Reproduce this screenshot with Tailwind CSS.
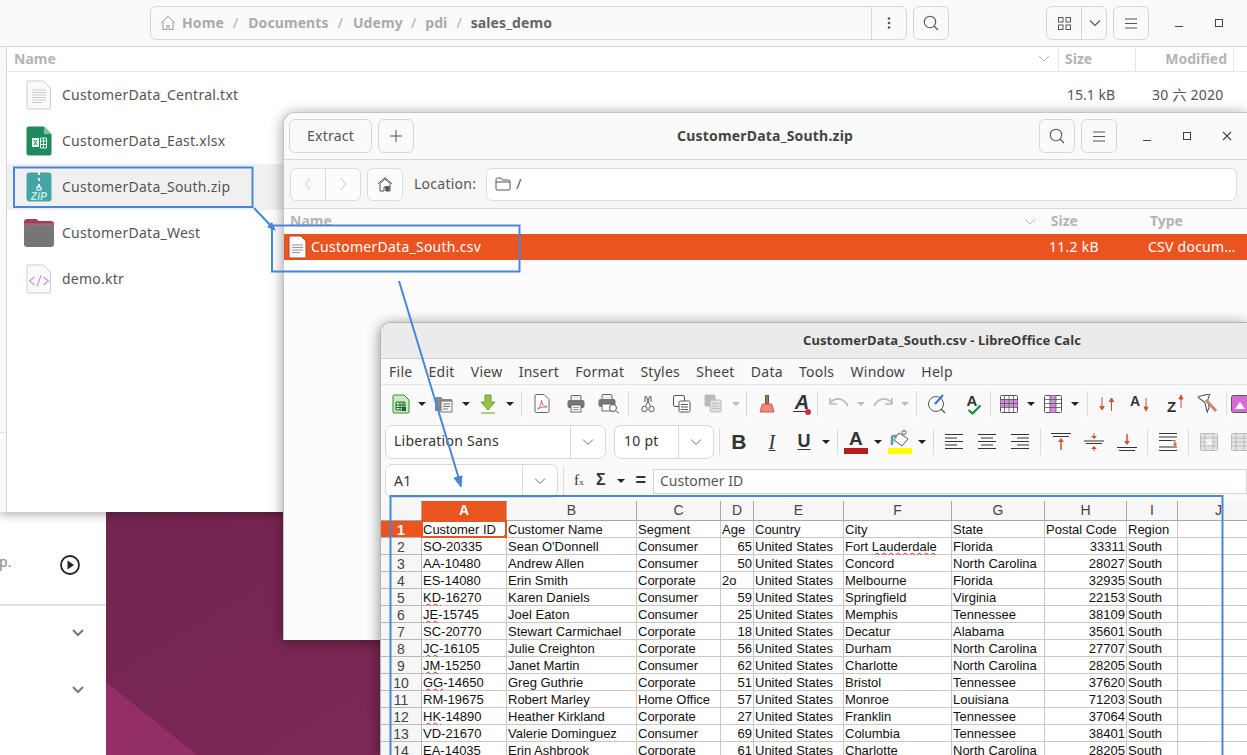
<!DOCTYPE html>
<html lang="en">
  <head>
    <meta charset="UTF-8" />
    <title>CustomerData_South</title>
    <script src="https://cdn.jsdelivr.net/npm/@tailwindcss/browser@4"></script>
  </head>
  <body class="w-[1247px] h-[755px] overflow-hidden font-['Noto_Sans','Noto_Sans_CJK_SC',sans-serif] tracking-[0.25px]">
    <div class="relative w-[1247px] h-[755px] overflow-hidden bg-gradient-to-br from-[#66224a] to-[#8a2a5c]">
      <!-- wallpaper triangle -->
      <svg class="absolute left-0 top-0" width="1247" height="755"><polygon points="106,682 197,755 106,755" fill="#932e68" /></svg>

      <!-- window behind everything -->
      <div class="absolute left-0 top-[512px] w-[106px] h-[243px] bg-white text-[#888] text-[14px]">
        <div class="h-[94px] border-b-2 border-[#e2e2e2] flex items-center justify-between pl-0 pr-[26px]">
          <span class="-ml-[1px] mt-[6px]">p.</span>
          <svg width="20" height="20" viewBox="0 0 20 20" class="mt-[13px]"><circle cx="10" cy="10" r="9" fill="none" stroke="#222" stroke-width="1.8" /><polygon points="7.5,5.5 14,10 7.5,14.5" fill="#222" /></svg>
        </div>
        <svg class="absolute left-[71px] top-[116px]" width="14" height="10" viewBox="0 0 14 10"><path d="M2 2l5 5 5-5" fill="none" stroke="#777" stroke-width="2" /></svg>
        <svg class="absolute left-[71px] top-[173px]" width="14" height="10" viewBox="0 0 14 10"><path d="M2 2l5 5 5-5" fill="none" stroke="#777" stroke-width="2" /></svg>
      </div>

      <!-- file manager -->
      <div class="absolute left-0 top-0 w-[1247px] h-[512px] bg-white shadow-[0_2px_10px_rgba(0,0,0,0.35)] flex flex-col">
        <div class="h-[47px] shrink-0 bg-[#fafafa] border-b border-[#d8d8d8] flex items-start pt-[6px] pl-[150px]">
          <div class="w-[757px] h-[34px] border border-[#d6d6d6] rounded-[6px] flex items-center text-[14px] font-bold text-[#aaa] tracking-[0.1px]">
            <svg class="ml-[9px]" width="16" height="16" viewBox="0 0 16 16" fill="none" stroke="#999"><path d="M1 8l7-6.5L15 8M3 7v7.5h4v-4h2v4h4V7" /></svg>
            <span class="ml-[6px] -mt-[2px]">Home</span>
            <span class="ml-[9px] -mt-[2px] font-normal">/</span>
            <span class="ml-[10px] -mt-[2px]">Documents</span>
            <span class="ml-[9px] -mt-[2px] font-normal">/</span>
            <span class="ml-[10px] -mt-[2px]">Udemy</span>
            <span class="ml-[8px] -mt-[2px] font-normal">/</span>
            <span class="ml-[9px] -mt-[2px]">pdi</span>
            <span class="ml-[9px] -mt-[2px] font-normal">/</span>
            <span class="ml-[9px] -mt-[2px] text-[#666]">sales_demo</span>
            <div class="ml-auto w-[35px] h-full border-l border-[#d6d6d6] flex items-center justify-center">
              <svg width="4" height="12" viewBox="0 0 4 12" fill="#555"><circle cx="2" cy="1.5" r="1.3" /><circle cx="2" cy="6" r="1.3" /><circle cx="2" cy="10.5" r="1.3" /></svg>
            </div>
          </div>
          <div class="ml-[6px] w-[36px] h-[34px] border border-[#d6d6d6] rounded-[6px] flex items-center justify-center">
            <svg width="16" height="16" viewBox="0 0 16 16" fill="none" stroke="#555" stroke-width="1.1"><circle cx="7" cy="7" r="5.7" /><path d="M11 11l4 4" /></svg>
          </div>
          <div class="ml-[97px] w-[61px] h-[34px] border border-[#d6d6d6] rounded-[6px] flex items-center">
            <div class="w-[35px] h-full border-r border-[#d6d6d6] flex items-center justify-center">
              <svg width="13" height="13" viewBox="0 0 13 13" fill="none" stroke="#555"><rect x="0.5" y="0.5" width="4.5" height="4.5" /><rect x="8" y="0.5" width="4.5" height="4.5" /><rect x="0.5" y="8" width="4.5" height="4.5" /><rect x="8" y="8" width="4.5" height="4.5" /></svg>
            </div>
            <svg class="ml-[7px]" width="12" height="8" viewBox="0 0 12 8"><path d="M1 1.5l5 5 5-5" fill="none" stroke="#555" stroke-width="1.1" /></svg>
          </div>
          <div class="ml-[6px] w-[36px] h-[34px] border border-[#d6d6d6] rounded-[6px] flex items-center justify-center">
            <svg width="12" height="11" viewBox="0 0 12 11" stroke="#555"><path d="M0 1h12M0 5.5h12M0 10h12" /></svg>
          </div>
          <svg class="ml-[24px] mt-[19px]" width="12" height="3" viewBox="0 0 12 3"><path d="M2 1.5h8" stroke="#444" /></svg>
          <svg class="ml-[28px] mt-[11px]" width="12" height="12" viewBox="0 0 12 12"><rect x="2.5" y="2.500" width="7" height="7" fill="none" stroke="#444" /></svg>
        </div>
        <div class="flex-1 flex">
          <div class="w-[7px] bg-[#fafafa] border-r border-[#d8d8d8] relative">
            <div class="absolute left-0 top-[385px] w-full h-px bg-[#e4e4e4]"></div>
          </div>
          <div class="flex-1">
            <div class="h-[25px] border-b border-[#e6e6e6] flex items-center text-[14px] font-bold text-[#b4b4b4] tracking-normal">
              <span class="ml-[7px] -mt-[2px]">Name</span>
              <svg class="ml-auto mr-[8px]" width="12" height="8" viewBox="0 0 12 8"><path d="M1 1l5 5 5-5" fill="none" stroke="#bbb" /></svg>
              <span class="w-[77px] h-full border-l border-[#e6e6e6] pl-[6px] pb-[2px] flex items-center">Size</span>
              <span class="w-[98px] h-full border-l border-[#e6e6e6] pr-[6px] pb-[2px] flex items-center justify-end">Modified</span>
              <span class="w-[14px] h-full border-l border-[#e6e6e6]"></span>
            </div>
            <div class="text-[14px] text-[#555]">
              <div class="h-[46px] flex items-center">
                <svg class="ml-[19px]" width="26" height="30" viewBox="0 0 26 30"><path d="M2.5 1h15l7 7v19.5a1.5 1.5 0 0 1-1.5 1.5H2.500a1.500 1.500 0 0 1-1.500-1.500V2.500A1.500 1.500 0 0 1 2.500 1z" fill="#fafafa" stroke="#ccc" /><path d="M6 10h14M6 12.500h14M6 15h14M6 17.500h14M6 20h14M6 22.500h10" stroke="#ccc" /></svg>
                <span class="ml-[10px] -mt-[2px]">CustomerData_Central.txt</span>
                <span class="ml-auto w-[85px] -mt-[2px] tracking-normal">15.1 kB</span>
                <span class="w-[95px] -mt-[2px]">30 六 2020</span>
              </div>
              <div class="h-[46px] flex items-center">
                <svg class="ml-[19px]" width="26" height="30" viewBox="0 0 26 30"><path d="M3 0.500h15l7.500 7.500v19a2.500 2.500 0 0 1-2.500 2.500H3a2.500 2.500 0 0 1-2.500-2.500V3A2.500 2.500 0 0 1 3 0.500z" fill="#1f8a5b" /><path d="M18 0.500l7.500 7.500H18z" fill="#7fc4a2" /><rect x="6" y="12" width="7" height="9" fill="#e8f5ee" /><path d="M8 14l3 5M11 14l-3 5" stroke="#1f8a5b" /><path d="M14.500 12h6v10h-6zM14.500 15h6M14.500 18.500h6M17.500 12v10" fill="none" stroke="#dff1e8" /></svg>
                <span class="ml-[10px] -mt-[2px]">CustomerData_East.xlsx</span>
              </div>
              <div class="h-[46px] flex items-center bg-[#f0f0f0]">
                <svg class="ml-[19px]" width="26" height="30" viewBox="0 0 26 30"><rect x="0.500" y="0.500" width="25" height="29" rx="3" fill="#45a5a5" /><path d="M13 0v3M13 6v3M13 12v3" stroke="#fff" stroke-width="2" /><rect x="11" y="15" width="4" height="3" fill="none" stroke="#fff" /><text x="13" y="27.500" text-anchor="middle" font-size="10" font-weight="700" font-style="italic" fill="#c4ecdf" font-family="Liberation Sans">ZiP</text></svg>
                <span class="ml-[10px] -mt-[2px]">CustomerData_South.zip</span>
              </div>
              <div class="h-[46px] flex items-center">
                <svg class="ml-[16px]" width="32" height="30" viewBox="0 0 32 30"><path d="M1 4a3 3 0 0 1 3-3h9l3 2h12a3 3 0 0 1 3 3v3H1z" fill="#a83a5e" /><rect x="1" y="6" width="30" height="23" rx="3" fill="#767676" /><path d="M1 6h30" stroke="#c76a6a" /></svg>
                <span class="ml-[7px] -mt-[2px]">CustomerData_West</span>
              </div>
              <div class="h-[46px] flex items-center">
                <svg class="ml-[19px]" width="26" height="30" viewBox="0 0 26 30"><path d="M2.500 1h15l7 7v19.500a1.500 1.500 0 0 1-1.500 1.500H2.500a1.500 1.500 0 0 1-1.500-1.500V2.500A1.500 1.500 0 0 1 2.500 1z" fill="#fafafa" stroke="#ccc" /><path d="M8.500 13l-5 4 5 4M17.500 13l5 4-5 4M15 11.500l-4 11" fill="none" stroke="#d08ad8" stroke-width="1.100" /></svg>
                <span class="ml-[10px] -mt-[2px]">demo.ktr</span>
              </div>
            </div>
          </div>
        </div>
      </div>

      <!-- archive manager -->
      <div class="absolute left-[283px] top-[112px] w-[964px] h-[528px] bg-[#fcfcfc] rounded-tl-[12px] border-l border-t border-[#c4c4c4] shadow-[0_2px_14px_rgba(0,0,0,0.4)] flex flex-col">
        <div class="h-[47px] shrink-0 border-b border-[#d8d8d8] bg-[#fafafa] rounded-tl-[12px] flex items-center relative text-[14px] text-[#555]">
          <div class="ml-[5px] w-[83px] h-[34px] pb-[2px] border border-[#d6d6d6] rounded-[6px] flex items-center justify-center">Extract</div>
          <div class="ml-[6px] w-[36px] h-[34px] border border-[#d6d6d6] rounded-[6px] flex items-center justify-center">
            <svg width="12" height="12" viewBox="0 0 12 12" stroke="#555"><path d="M6 0v12M0 6h12" /></svg>
          </div>
          <span class="absolute left-[393px] -mt-[2px] font-bold text-[#444] tracking-[0.2px]">CustomerData_South.zip</span>
          <div class="ml-auto w-[36px] h-[34px] border border-[#d6d6d6] rounded-[6px] flex items-center justify-center">
            <svg width="16" height="16" viewBox="0 0 16 16" fill="none" stroke="#555" stroke-width="1.100"><circle cx="7" cy="7" r="5.700" /><path d="M11 11l4 4" /></svg>
          </div>
          <div class="ml-[6px] w-[36px] h-[34px] border border-[#d6d6d6] rounded-[6px] flex items-center justify-center">
            <svg width="12" height="11" viewBox="0 0 12 11" stroke="#555"><path d="M0 1h12M0 5.500h12M0 10h12" /></svg>
          </div>
          <svg class="ml-[24px] mt-[8px]" width="12" height="3" viewBox="0 0 12 3"><path d="M2 1.500h8" stroke="#444" /></svg>
          <svg class="ml-[28px]" width="12" height="12" viewBox="0 0 12 12"><rect x="2.500" y="2.500" width="7" height="7" fill="none" stroke="#444" /></svg>
          <svg class="ml-[29px] mr-[15px]" width="10" height="10" viewBox="0 0 10 10"><path d="M1 1l8 8M9 1l-8 8" stroke="#444" stroke-width="1.100" /></svg>
        </div>
        <div class="h-[49px] shrink-0 bg-[#f6f6f6] border-b border-[#d8d8d8] flex items-center text-[14px] text-[#555]">
          <div class="ml-[6px] w-[71px] h-[33px] bg-[#fcfcfc] border border-[#dcdcdc] rounded-[6px] flex">
            <div class="w-[35px] border-r border-[#dcdcdc] flex items-center justify-center">
              <svg width="8" height="14" viewBox="0 0 8 14"><path d="M6 1L1.500 7 6 13" fill="none" stroke="#ccc" /></svg>
            </div>
            <div class="flex-1 flex items-center justify-center">
              <svg width="8" height="14" viewBox="0 0 8 14"><path d="M2 1l4.500 6L2 13" fill="none" stroke="#ccc" /></svg>
            </div>
          </div>
          <div class="ml-[6px] w-[36px] h-[33px] bg-[#fcfcfc] border border-[#dcdcdc] rounded-[6px] flex items-center justify-center">
            <svg width="16" height="16" viewBox="0 0 16 16"><path d="M1 8l7-6.500L15 8" fill="none" stroke="#555" /><path d="M3 7.500L8 3l5 4.500V15H9v-4H7v4H3z" fill="none" stroke="#555" /><rect x="8.500" y="10" width="4" height="5" fill="#555" /></svg>
          </div>
          <span class="ml-[11px] -mt-[2px]">Location:</span>
          <div class="ml-[10px] w-[751px] h-[33px] bg-white border border-[#dcdcdc] rounded-[6px] flex items-center">
            <svg class="ml-[8px]" width="16" height="14" viewBox="0 0 16 14" fill="none" stroke="#555"><path d="M1 12V2.500A1.500 1.500 0 0 1 2.500 1H6l1.500 2h6A1.500 1.500 0 0 1 15 4.500V12a1 1 0 0 1-1 1H2a1 1 0 0 1-1-1zM1 5h14" /></svg>
            <span class="ml-[5px] -mt-[2px]">/</span>
          </div>
        </div>
        <div class="h-[25px] shrink-0 flex items-center text-[14px] font-bold text-[#b4b4b4] tracking-normal">
          <span class="ml-[6px] -mt-[2px]">Name</span>
          <svg class="ml-[692px]" width="12" height="8" viewBox="0 0 12 8"><path d="M1 1l5 5 5-5" fill="none" stroke="#bbb" /></svg>
          <span class="ml-[15px] -mt-[2px]">Size</span>
          <span class="ml-[72px] -mt-[2px]">Type</span>
        </div>
        <div class="h-[26px] shrink-0 bg-[#e95420] flex items-center text-[14px] text-white">
          <svg class="ml-[4px]" width="19" height="24" viewBox="0 0 19 24"><path d="M2 1h11l5 5v15.500a1.500 1.500 0 0 1-1.500 1.500H2a1.500 1.500 0 0 1-1-1.500V2.500A1.500 1.500 0 0 1 2 1z" fill="#fafafa" stroke="#b84317" /><path d="M4 10h11M4 12.500h11M4 15h11M4 17.500h8" stroke="#999" /></svg>
          <span class="ml-[4px] -mt-[2px]">CustomerData_South.csv</span>
          <span class="absolute left-[765px] -mt-[2px]">11.2 kB</span>
          <span class="absolute left-[864px] -mt-[2px]">CSV docum…</span>
        </div>
      </div>

      <!-- libreoffice calc -->
      <div class="absolute left-[380px] top-[322px] w-[867px] h-[433px] bg-[#fafafa] rounded-tl-[10px] border-l border-t border-[#b4b4b4] shadow-[0_2px_14px_rgba(0,0,0,0.45)] flex flex-col overflow-hidden">
        <div class="h-[36px] shrink-0 bg-[#ebebeb] border-b border-[#cfcfcf] flex items-center justify-center text-[13px] font-bold text-[#3c3c3c] tracking-[0.1px]">
          <span class="ml-[256px]">CustomerData_South.csv - LibreOffice Calc</span>
        </div>
        <div class="h-[26px] shrink-0 border-b border-[#e4e4e4] flex items-center gap-[16.2px] pl-[8px] text-[14px] text-[#444]">
          <span>File</span><span>Edit</span><span>View</span><span>Insert</span><span>Format</span><span>Styles</span><span>Sheet</span><span>Data</span><span>Tools</span><span>Window</span><span>Help</span>
        </div>
        <!-- standard toolbar -->
        <div class="h-[37px] shrink-0 flex items-center pl-[4px] *:shrink-0">
          <div class="w-[32px] flex justify-center"><svg width="18" height="20" viewBox="0 0 18 20"><path d="M2 1h10l5 5v12a1 1 0 0 1-1 1H2a1 1 0 0 1-1-1V2a1 1 0 0 1 1-1z" fill="#c9ecc0" stroke="#2f8f3a" /><path d="M4 8h9v8H4zM4 11h9M4 13.500h9M8 8v8M11 8v8" fill="none" stroke="#22662c" /><rect x="10" y="13" width="4" height="4" fill="#22662c" /></svg></div>
          <div class="w-[10px] flex justify-center"><div class="w-0 h-0 border-x-[4px] border-x-transparent border-t-[4px] border-t-[#222]"></div></div>
          <div class="w-[34px] flex justify-center"><svg width="20" height="18" viewBox="0 0 20 18"><path d="M1 16V3a1 1 0 0 1 1-1h5l2 2h8a1 1 0 0 1 1 1v11z" fill="#8a8a8a" /><rect x="7" y="6" width="11" height="11" fill="#f4f4f4" stroke="#777" /><path d="M9 9h7M9 11.500h7M9 14h5" stroke="#777" /></svg></div>
          <div class="w-[10px] flex justify-center"><div class="w-0 h-0 border-x-[4px] border-x-transparent border-t-[4px] border-t-[#222]"></div></div>
          <div class="w-[34px] flex justify-center"><svg width="18" height="20" viewBox="0 0 18 20"><path d="M6 1h6v7h4l-7 8-7-8h4z" fill="#9ac34a" stroke="#6b9a2a" /><path d="M2 19h14" stroke="#6b9a2a" /></svg></div>
          <div class="w-[10px] flex justify-center"><div class="w-0 h-0 border-x-[4px] border-x-transparent border-t-[4px] border-t-[#222]"></div></div>
          <div class="w-[6px]"></div><div class="w-px h-[26px] bg-[#dcdcdc]"></div>
          <div class="w-[40px] flex justify-center"><svg width="16" height="19" viewBox="0 0 16 19"><path d="M2 .500h8l5 5V17a1.500 1.500 0 0 1-1.500 1.500h-11A1.500 1.500 0 0 1 1 17V2a1.500 1.500 0 0 1 1-1.500z" fill="#fff" stroke="#666" /><path d="M3.500 15c3-2 4-6 4-9 0 4 2 6 5.500 7-3 0-6 0-9.500 2z" fill="none" stroke="#d0606a" /></svg></div>
          <div class="w-[28px] flex justify-center"><svg width="18" height="18" viewBox="0 0 18 18"><rect x="4" y="0.500" width="10" height="5" rx="1" fill="#eee" stroke="#666" /><rect x="0.500" y="5" width="17" height="8" rx="2" fill="#777" /><rect x="4" y="10" width="10" height="7" fill="#fff" stroke="#666" /><path d="M6 12.500h6M6 14.500h6" stroke="#7a9ac8" /></svg></div>
          <div class="w-[38px] flex justify-center"><svg width="22" height="20" viewBox="0 0 22 20"><rect x="4" y="0.500" width="10" height="5" rx="1" fill="#eee" stroke="#666" /><rect x="0.500" y="5" width="17" height="8" rx="2" fill="#777" /><rect x="4" y="10" width="10" height="7" fill="#fff" stroke="#666" /><circle cx="15" cy="14" r="3.500" fill="#fff" stroke="#555" /><path d="M17.500 16.500l3.500 3" stroke="#555" /></svg></div>
          <div class="w-px h-[26px] bg-[#dcdcdc]"></div>
          <div class="w-[38px] flex justify-center"><svg width="14" height="18" viewBox="0 0 14 18" fill="none" stroke="#555"><circle cx="3.500" cy="14" r="2.700" /><circle cx="10.500" cy="14" r="2.700" /><path d="M4.500 11.500L9 1M9.500 11.500L5 1M4 1v6M10 1v6" /></svg></div>
          <div class="w-[30px] flex justify-center"><svg width="18" height="18" viewBox="0 0 18 18"><rect x="0.500" y="0.500" width="11" height="11" rx="1.500" fill="#fff" stroke="#555" /><rect x="6" y="6" width="11" height="11" rx="1.500" fill="#fff" stroke="#555" /><path d="M8 9.500h7M8 12h7M8 14.500h7" stroke="#555" /></svg></div>
          <div class="w-[32px] flex justify-center"><svg width="18" height="19" viewBox="0 0 18 19"><rect x="0.500" y="0.500" width="11" height="12" rx="1.500" fill="#bbb" /><rect x="6" y="6" width="11" height="12" rx="1.500" fill="#e0e0e0" stroke="#bbb" /><path d="M8 9.500h7M8 12h7M8 14.500h7" stroke="#bbb" /></svg></div>
          <div class="w-[14px] flex justify-center"><div class="w-0 h-0 border-x-[4px] border-x-transparent border-t-[4px] border-t-[#bbb]"></div></div>
          <div class="w-[3px]"></div><div class="w-px h-[26px] bg-[#dcdcdc]"></div>
          <div class="w-[40px] flex justify-center"><svg width="16" height="18" viewBox="0 0 16 18"><rect x="6.500" y="0.500" width="3" height="8" fill="#9a7d5a" stroke="#6a5236" /><path d="M1 17l2-7a1 1 0 0 1 1-1h8a1 1 0 0 1 1 1l2 7z" fill="#f0877a" stroke="#c6604f" /></svg></div>
          <div class="w-[30px] relative h-[24px] flex justify-center">
            <span class="font-['Liberation_Sans',sans-serif] italic font-bold text-[20px] leading-[20px] text-[#333]">A</span>
            <div class="absolute left-[6px] top-[19px] w-[14px] h-px bg-[#333]"></div>
            <div class="absolute left-[18px] top-[17px] w-[6px] h-[6px] rounded-full bg-[#d0294b]"></div>
          </div>
          <div class="w-px h-[26px] bg-[#dcdcdc]"></div>
          <div class="w-[6px]"></div>
          <div class="w-[30px] flex justify-center"><svg width="22" height="13" viewBox="0 0 22 13"><path d="M2 6c5-6 13-6 18 3M2 1v6h7" fill="none" stroke="#bbb" stroke-width="1.700" /></svg></div>
          <div class="w-[14px] flex justify-center"><div class="w-0 h-0 border-x-[4px] border-x-transparent border-t-[4px] border-t-[#bbb]"></div></div>
          <div class="w-[30px] flex justify-center"><svg width="22" height="13" viewBox="0 0 22 13"><path d="M20 6C15 0 7 0 2 9M20 1v6h-7" fill="none" stroke="#bbb" stroke-width="1.700" /></svg></div>
          <div class="w-[14px] flex justify-center"><div class="w-0 h-0 border-x-[4px] border-x-transparent border-t-[4px] border-t-[#bbb]"></div></div>
          <div class="w-[4px]"></div><div class="w-px h-[26px] bg-[#dcdcdc]"></div>
          <div class="w-[40px] flex justify-center"><svg width="20" height="20" viewBox="0 0 20 20" fill="none"><circle cx="9" cy="10" r="7.500" stroke="#555" /><path d="M14 15l4 4" stroke="#555" stroke-width="1.300" /><path d="M8 10l8-9" stroke="#3a6ed0" stroke-width="2" /></svg></div>
          <div class="w-[30px] flex justify-center relative h-[24px]">
            <span class="font-['Liberation_Sans',sans-serif] font-bold text-[15px] leading-[17px] text-[#333]">A</span>
            <svg class="absolute left-[10px] top-[12px]" width="15" height="11" viewBox="0 0 15 11"><path d="M1.500 6l4 3.500 8-8" fill="none" stroke="#1a8a3c" stroke-width="2.200" /></svg>
          </div>
          <div class="w-[3px]"></div><div class="w-px h-[26px] bg-[#dcdcdc]"></div>
          <div class="w-[36px] flex justify-center"><svg width="18" height="18" viewBox="0 0 18 18"><rect x="0.500" y="0.500" width="17" height="17" rx="1" fill="#fff" stroke="#555" /><rect x="0.500" y="4" width="17" height="8" fill="#d68be0" /><path d="M0 4.500h18M0 8.500h18M0 12.500h18M4.500 0v18M9 0v18M13.500 0v18" stroke="#555" stroke-width="0.800" /></svg></div>
          <div class="w-[8px] flex justify-center"><div class="w-0 h-0 border-x-[4px] border-x-transparent border-t-[4px] border-t-[#222]"></div></div>
          <div class="w-[36px] flex justify-center"><svg width="18" height="18" viewBox="0 0 18 18"><rect x="0.500" y="0.500" width="17" height="17" rx="1" fill="#fff" stroke="#555" /><rect x="6" y="0.500" width="6" height="17" fill="#d68be0" /><path d="M0 4.500h18M0 8.500h18M0 12.500h18M6 0v18M12 0v18" stroke="#555" stroke-width="0.800" /></svg></div>
          <div class="w-[8px] flex justify-center"><div class="w-0 h-0 border-x-[4px] border-x-transparent border-t-[4px] border-t-[#222]"></div></div>
          <div class="w-[8px]"></div><div class="w-px h-[26px] bg-[#dcdcdc]"></div>
          <div class="w-[38px] flex justify-center"><svg width="16" height="14" viewBox="0 0 16 14" fill="#c8552a" stroke="#c8552a"><path d="M3 0v11" fill="none" /><path d="M0.800 9.500L3 13l2.200-3.500z" /><path d="M12.500 14V3" fill="none" /><path d="M10.300 4.500L12.500 1l2.200 3.500z" /></svg></div>
          <div class="w-[28px] relative h-[24px]">
            <span class="absolute left-[4px] top-[1px] font-['Liberation_Sans',sans-serif] font-bold text-[14px] leading-[16px] text-[#333]">A</span>
            <svg class="absolute left-[17px] top-[6px]" width="6" height="14" viewBox="0 0 6 14" fill="#c8552a" stroke="#c8552a"><path d="M3 0v10" /><path d="M1 9l2 4 2-4z" /></svg>
          </div>
          <div class="w-[38px] relative h-[24px]">
            <span class="absolute left-[13px] top-[6px] font-['Liberation_Sans',sans-serif] font-bold text-[15px] leading-[17px] text-[#333]">Z</span>
            <svg class="absolute left-[24px] top-[2px]" width="6" height="14" viewBox="0 0 6 14" fill="#c8552a" stroke="#c8552a"><path d="M3 14V4" /><path d="M1 5l2-4 2 4z" /></svg>
          </div>
          <div class="w-[32px] flex justify-center"><svg width="20" height="20" viewBox="0 0 20 20"><path d="M1 1h13l-4 6v7l-3 4V8z" fill="#fff" stroke="#444" transform="rotate(-14 8 9)" /><path d="M8 6l10 11" stroke="#c98a78" stroke-width="3" /></svg></div>
          <div class="w-[2px]"></div><div class="w-px h-[26px] bg-[#dcdcdc]"></div>
          <div class="w-[26px] flex justify-center"><svg class="shrink-0" width="18" height="18" viewBox="0 0 18 18"><rect x="0.500" y="0.500" width="17" height="17" rx="2" fill="#d56bd6" stroke="#555" /><path d="M4 14l5-7 5 7z" fill="#fff" /></svg></div>
        </div>
        <!-- formatting toolbar -->
        <div class="h-[39px] shrink-0 flex items-center pl-[4px] *:shrink-0">
          <div class="w-[221px] h-[34px] bg-white border border-[#d8d8d8] rounded-[7px] flex items-center text-[14px] text-[#333]">
            <span class="ml-[8px] -mt-[2px] flex-1">Liberation Sans</span>
            <div class="w-[35px] h-full border-l border-[#d8d8d8] flex items-center justify-center"><svg width="12" height="8" viewBox="0 0 12 8"><path d="M1 1.500l5 5 5-5" fill="none" stroke="#666" /></svg></div>
          </div>
          <div class="ml-[8px] w-[100px] h-[34px] bg-white border border-[#d8d8d8] rounded-[7px] flex items-center text-[14px] text-[#333]">
            <span class="ml-[9px] -mt-[2px] flex-1">10 pt</span>
            <div class="w-[35px] h-full border-l border-[#d8d8d8] flex items-center justify-center"><svg width="12" height="8" viewBox="0 0 12 8"><path d="M1 1.500l5 5 5-5" fill="none" stroke="#666" /></svg></div>
          </div>
          <div class="w-[5px]"></div><div class="w-px h-[26px] bg-[#dcdcdc]"></div>
          <div class="w-[38px] text-center font-['Liberation_Sans',sans-serif] font-bold text-[21px] text-[#333]">B</div>
          <div class="w-[28px] text-center font-['Liberation_Serif',serif] italic text-[20px] text-[#333] underline decoration-1 underline-offset-1">I</div>
          <div class="w-[36px] text-center font-['Liberation_Sans',sans-serif] font-bold text-[18px] text-[#333] underline decoration-1 underline-offset-2">U</div>
          <div class="w-[8px] flex justify-center"><div class="w-0 h-0 border-x-[4px] border-x-transparent border-t-[4px] border-t-[#222]"></div></div>
          <div class="w-[7px]"></div><div class="w-px h-[26px] bg-[#dcdcdc]"></div>
          <div class="w-[36px] flex flex-col items-center">
            <span class="font-['Liberation_Sans',sans-serif] font-bold text-[19px] leading-[18px] text-[#333]">A</span>
            <div class="w-[24px] h-[6px] bg-[#b91c1c]"></div>
          </div>
          <div class="w-[8px] flex justify-center"><div class="w-0 h-0 border-x-[4px] border-x-transparent border-t-[4px] border-t-[#222]"></div></div>
          <div class="w-[36px] flex flex-col items-center">
            <svg width="22" height="18" viewBox="0 0 22 18"><path d="M10 3l9 6-6 7-8-6z" fill="#fff" stroke="#555" /><path d="M3 15V8a2 2 0 0 1 2-2h3" fill="none" stroke="#5a9aa8" stroke-width="2.500" /><circle cx="15" cy="2.500" r="2" fill="none" stroke="#555" /></svg>
            <div class="w-[24px] h-[6px] bg-[#ffff00]"></div>
          </div>
          <div class="w-[8px] flex justify-center"><div class="w-0 h-0 border-x-[4px] border-x-transparent border-t-[4px] border-t-[#222]"></div></div>
          <div class="w-[7px]"></div><div class="w-px h-[26px] bg-[#dcdcdc]"></div>
          <div class="w-[40px] flex justify-center"><svg width="18" height="16" viewBox="0 0 18 16" stroke="#333"><path d="M0 .500h18M0 4h12M0 7.500h18M0 11h12M0 14.500h18" /></svg></div>
          <div class="w-[26px] flex justify-center"><svg width="18" height="16" viewBox="0 0 18 16" stroke="#333"><path d="M0 .500h18M3 4h12M0 7.500h18M3 11h12M0 14.500h18" /></svg></div>
          <div class="w-[40px] flex justify-center"><svg width="18" height="16" viewBox="0 0 18 16" stroke="#333"><path d="M0 .500h18M6 4h12M0 7.500h18M6 11h12M0 14.500h18" /></svg></div>
          <div class="w-px h-[26px] bg-[#dcdcdc]"></div>
          <div class="w-[40px] flex justify-center"><svg width="20" height="18" viewBox="0 0 20 18"><path d="M0 .500h20M2 3.500h16" stroke="#333" /><path d="M10 17V8" stroke="#c8552a" stroke-width="1.500" /><path d="M7 9l3-4 3 4z" fill="#c8552a" /></svg></div>
          <div class="w-[26px] flex justify-center"><svg width="20" height="18" viewBox="0 0 20 18"><path d="M0 8h20M2 10.500h16" stroke="#333" /><path d="M7 3l3 3 3-3zM7 16l3-3 3 3z" fill="#c8552a" /><path d="M10 0v3M10 15v3" stroke="#c8552a" /></svg></div>
          <div class="w-[40px] flex justify-center"><svg width="20" height="18" viewBox="0 0 20 18"><path d="M0 14.500h20M2 17.500h16" stroke="#333" /><path d="M10 1v8" stroke="#c8552a" stroke-width="1.500" /><path d="M7 8l3 4 3-4z" fill="#c8552a" /></svg></div>
          <div class="w-px h-[26px] bg-[#dcdcdc]"></div>
          <div class="w-[40px] flex justify-center"><svg width="18" height="18" viewBox="0 0 18 18"><path d="M0 .500h18M0 4h18M0 7.500h12M0 14h18M0 17.500h18" stroke="#333" /><path d="M12 7.500h4v4" fill="none" stroke="#c8552a" /><path d="M14 10.500l2 3 2-3z" fill="#c8552a" /></svg></div>
          <div class="w-px h-[26px] bg-[#dcdcdc]"></div>
          <div class="w-[40px] flex justify-center"><svg width="18" height="18" viewBox="0 0 18 18"><rect x="0.500" y="0.500" width="17" height="17" rx="1" fill="#e4e4e4" stroke="#bbb" /><rect x="5" y="5" width="8" height="8" fill="#f2f2f2" /><path d="M5 0v18M13 0v18M0 5h18M0 9h5M13 9h5M0 13h18" stroke="#bbb" /></svg></div>
          <div class="w-[22px] flex justify-center"><svg class="shrink-0" width="18" height="18" viewBox="0 0 18 18"><rect x="0.500" y="0.500" width="17" height="17" rx="1" fill="#e4e4e4" stroke="#bbb" /><path d="M5 0v18M0 5h18M0 9h18M0 13h18M13 0v18" stroke="#bbb" /></svg></div>
        </div>
        <!-- name box and formula bar -->
        <div class="h-[40px] shrink-0 flex items-start pl-[4px] pt-[3px]">
          <div class="w-[173px] h-[34px] bg-white border border-[#d8d8d8] rounded-[7px] flex items-center text-[14px] text-[#333]">
            <span class="ml-[8px] -mt-[2px] flex-1">A1</span>
            <div class="w-[35px] h-full border-l border-[#d8d8d8] flex items-center justify-center"><svg width="12" height="8" viewBox="0 0 12 8"><path d="M1 1.500l5 5 5-5" fill="none" stroke="#666" /></svg></div>
          </div>
          <div class="ml-[5px] w-px h-[30px] bg-[#dcdcdc] mt-[2px]"></div>
          <div class="w-[30px] mt-[6px] text-center font-['Liberation_Serif',serif] text-[#333] text-[15px] leading-[20px]">f<span class="text-[9px]">x</span></div>
          <div class="w-[14px] mt-[6px] text-center font-['Liberation_Sans',sans-serif] font-bold text-[#333] text-[16px] leading-[20px]">Σ</div>
          <div class="w-[26px] mt-[15px] flex justify-center"><div class="w-0 h-0 border-x-[4px] border-x-transparent border-t-[4px] border-t-[#222]"></div></div>
          <div class="w-[14px] mt-[6px] text-center font-['Liberation_Sans',sans-serif] font-bold text-[#333] text-[18px] leading-[20px]">=</div>
          <div class="ml-[5px] mt-[5px] flex-1 h-[25px] bg-white border border-[#d4d4d4] flex items-center text-[14px] text-[#555] tracking-normal">
            <span class="ml-[6px] -mt-[2px]">Customer ID</span>
          </div>
        </div>
        <div id="sheet" class="grid grid-cols-[41px_85px_130px_84px_33px_90px_108px_93px_82px_51px_82px] font-['Liberation_Sans',sans-serif] text-[13px] text-[#111] tracking-normal"></div>
      </div>

      <!-- annotations -->
      <svg class="absolute left-0 top-0 pointer-events-none" width="1247" height="755" fill="none" stroke="#4a86d8" stroke-width="2">
        <rect x="14" y="167.500" width="238.500" height="39.500" />
        <rect x="272" y="225.500" width="247.500" height="46" />
        <path d="M390.500 760V496h832v264" />
        <path d="M254 208l19 20" />
        <polygon points="276,231 267,227 272,222" fill="#4a86d8" stroke="none" />
        <path d="M399 281l60 198" />
        <polygon points="461,487 454,478 462,476" fill="#4a86d8" stroke="#4a86d8" stroke-width="1" />
      </svg>
    </div>
    <script>
      const cols = ["A", "B", "C", "D", "E", "F", "G", "H", "I", "J"];
      const rows = [
        ["Customer ID", "Customer Name", "Segment", "Age", "Country", "City", "State", "Postal Code", "Region"],
        ["SO-20335", "Sean O'Donnell", "Consumer", 65, "United States", "Fort Lauderdale", "Florida", 33311, "South"],
        ["AA-10480", "Andrew Allen", "Consumer", 50, "United States", "Concord", "North Carolina", 28027, "South"],
        ["ES-14080", "Erin Smith", "Corporate", "2o", "United States", "Melbourne", "Florida", 32935, "South"],
        ["KD-16270", "Karen Daniels", "Consumer", 59, "United States", "Springfield", "Virginia", 22153, "South"],
        ["JE-15745", "Joel Eaton", "Consumer", 25, "United States", "Memphis", "Tennessee", 38109, "South"],
        ["SC-20770", "Stewart Carmichael", "Corporate", 18, "United States", "Decatur", "Alabama", 35601, "South"],
        ["JC-16105", "Julie Creighton", "Corporate", 56, "United States", "Durham", "North Carolina", 27707, "South"],
        ["JM-15250", "Janet Martin", "Consumer", 62, "United States", "Charlotte", "North Carolina", 28205, "South"],
        ["GG-14650", "Greg Guthrie", "Corporate", 51, "United States", "Bristol", "Tennessee", 37620, "South"],
        ["RM-19675", "Robert Marley", "Home Office", 57, "United States", "Monroe", "Louisiana", 71203, "South"],
        ["HK-14890", "Heather Kirkland", "Corporate", 27, "United States", "Franklin", "Tennessee", 37064, "South"],
        ["VD-21670", "Valerie Dominguez", "Consumer", 69, "United States", "Columbia", "Tennessee", 38401, "South"],
        ["EA-14035", "Erin Ashbrook", "Corporate", 61, "United States", "Charlotte", "North Carolina", 28205, "South"],
      ];
      const squiggle = ["KD", "JE", "JC", "JM", "GG", "HK"];
      const wavy = (t) => `<span class="underline decoration-wavy decoration-[#e02020] decoration-1">${t}</span>`;
      let html = `<div class="h-[20px] border-r border-b border-[#a8a8a8] bg-[#f6f6f6]"></div>`;
      cols.forEach((c, i) => {
        const on = i === 0;
        html += `<div class="h-[20px] border-r border-b border-[#a8a8a8] text-center text-[14px] leading-[19px] ${on ? "bg-[#e95420] text-white font-bold" : "bg-[#f6f6f6] text-[#444]"}">${c}</div>`;
      });
      rows.forEach((r, y) => {
        html += `<div class="h-[17px] border-r border-b border-[#b8b8b8] text-center text-[14px] leading-[18px] ${y === 0 ? "bg-[#e95420] text-white font-bold" : "bg-[#f6f6f6] text-[#444]"}">${y + 1}</div>`;
        r.concat([""]).forEach((v, x) => {
          let t = String(v);
          if (x === 0 && squiggle.includes(t.slice(0, 2))) t = wavy(t.slice(0, 2)) + t.slice(2);
          if (t === "Fort Lauderdale") t = "Fort " + wavy("Lauderdale");
          const num = typeof v === "number";
          const sel = x === 0 && y === 0;
          html += `<div class="relative h-[17px] border-r border-b border-[#c8c8c8] bg-white leading-[18px] whitespace-nowrap overflow-visible ${num ? "text-right pr-[1px]" : "pl-[1px]"}">${t}${sel ? '<div class="absolute -inset-[1px] border-2 border-[#e95420]"></div><div class="absolute -right-[3px] -bottom-[3px] w-[5px] h-[5px] bg-[#e95420]"></div>' : ""}</div>`;
        });
      });
      document.getElementById("sheet").innerHTML = html;
    </script>
  </body>
</html>
